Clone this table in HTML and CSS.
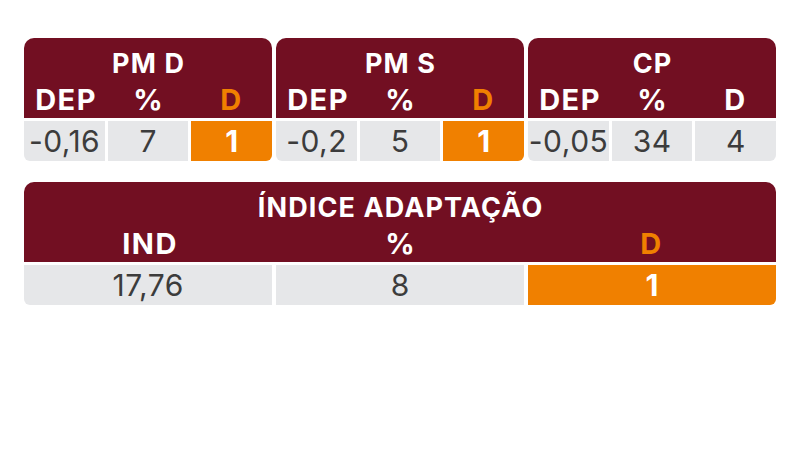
FILE: index.html
```html
<!DOCTYPE html>
<html lang="pt">
<head>
<meta charset="utf-8">
<title>Índices</title>
<link rel="stylesheet" href="styles.css">
</head>
<body>
<div class="page">
  <div class="row-top">
    <div class="block">
      <div class="head">
        <div class="title">PM D</div>
        <div class="subs">
          <span>DEP</span><span>%</span><span class="hl">D</span>
        </div>
      </div>
      <div class="cells">
        <div class="cell">-0,16</div>
        <div class="cell">7</div>
        <div class="cell orange">1</div>
      </div>
    </div>
    <div class="block">
      <div class="head">
        <div class="title">PM S</div>
        <div class="subs">
          <span>DEP</span><span>%</span><span class="hl">D</span>
        </div>
      </div>
      <div class="cells">
        <div class="cell">-0,2</div>
        <div class="cell">5</div>
        <div class="cell orange">1</div>
      </div>
    </div>
    <div class="block">
      <div class="head">
        <div class="title">CP</div>
        <div class="subs">
          <span>DEP</span><span>%</span><span>D</span>
        </div>
      </div>
      <div class="cells">
        <div class="cell">-0,05</div>
        <div class="cell">34</div>
        <div class="cell">4</div>
      </div>
    </div>
  </div>
  <div class="block wide">
    <div class="head">
      <div class="title">ÍNDICE ADAPTAÇÃO</div>
      <div class="subs">
        <span>IND</span><span>%</span><span class="hl">D</span>
      </div>
    </div>
    <div class="cells">
      <div class="cell">17,76</div>
      <div class="cell">8</div>
      <div class="cell orange">1</div>
    </div>
  </div>
</div>
</body>
</html>
```

FILE: styles.css
```css
* { box-sizing: border-box; }
html, body { margin: 0; padding: 0; background: #ffffff; }
body { font-family: Inter, Roboto, "Liberation Sans", Arial, sans-serif; }

.page {
  padding: 38px 24px 0 24px;
  display: flex;
  flex-direction: column;
  gap: 21px;
}

.row-top {
  display: grid;
  grid-template-columns: repeat(3, 1fr);
  gap: 4px;
}

.block {
  display: flex;
  flex-direction: column;
  gap: 3px;
}

.head {
  background: #720f22;
  border-radius: 10px 10px 0 0;
  padding-top: 8px;
  color: #ffffff;
  font-weight: 700;
  text-align: center;
}

.title {
  font-size: 27px;
  line-height: 36px;
  letter-spacing: 1.1px;
  padding-left: 1.1px;
}

.subs {
  display: grid;
  grid-template-columns: repeat(3, 1fr);
  font-size: 29px;
  line-height: 36px;
  letter-spacing: 1.5px;
}

.subs span { padding-left: 1.5px; }

.hl { color: #f08000; }

.cells {
  display: grid;
  grid-template-columns: repeat(3, 1fr);
  gap: 3px;
}

.wide .cells { gap: 4px; }

.cell {
  height: 40px;
  background: #e6e7e9;
  color: #3c3c3c;
  font-size: 30px;
  letter-spacing: 0.5px;
  padding-left: 0.5px;
  display: flex;
  align-items: center;
  justify-content: center;
}

.cell:first-child { border-bottom-left-radius: 6px; }
.cell:last-child { border-bottom-right-radius: 6px; }

.cell.orange {
  background: #f08000;
  color: #ffffff;
  font-weight: 700;
}
```
